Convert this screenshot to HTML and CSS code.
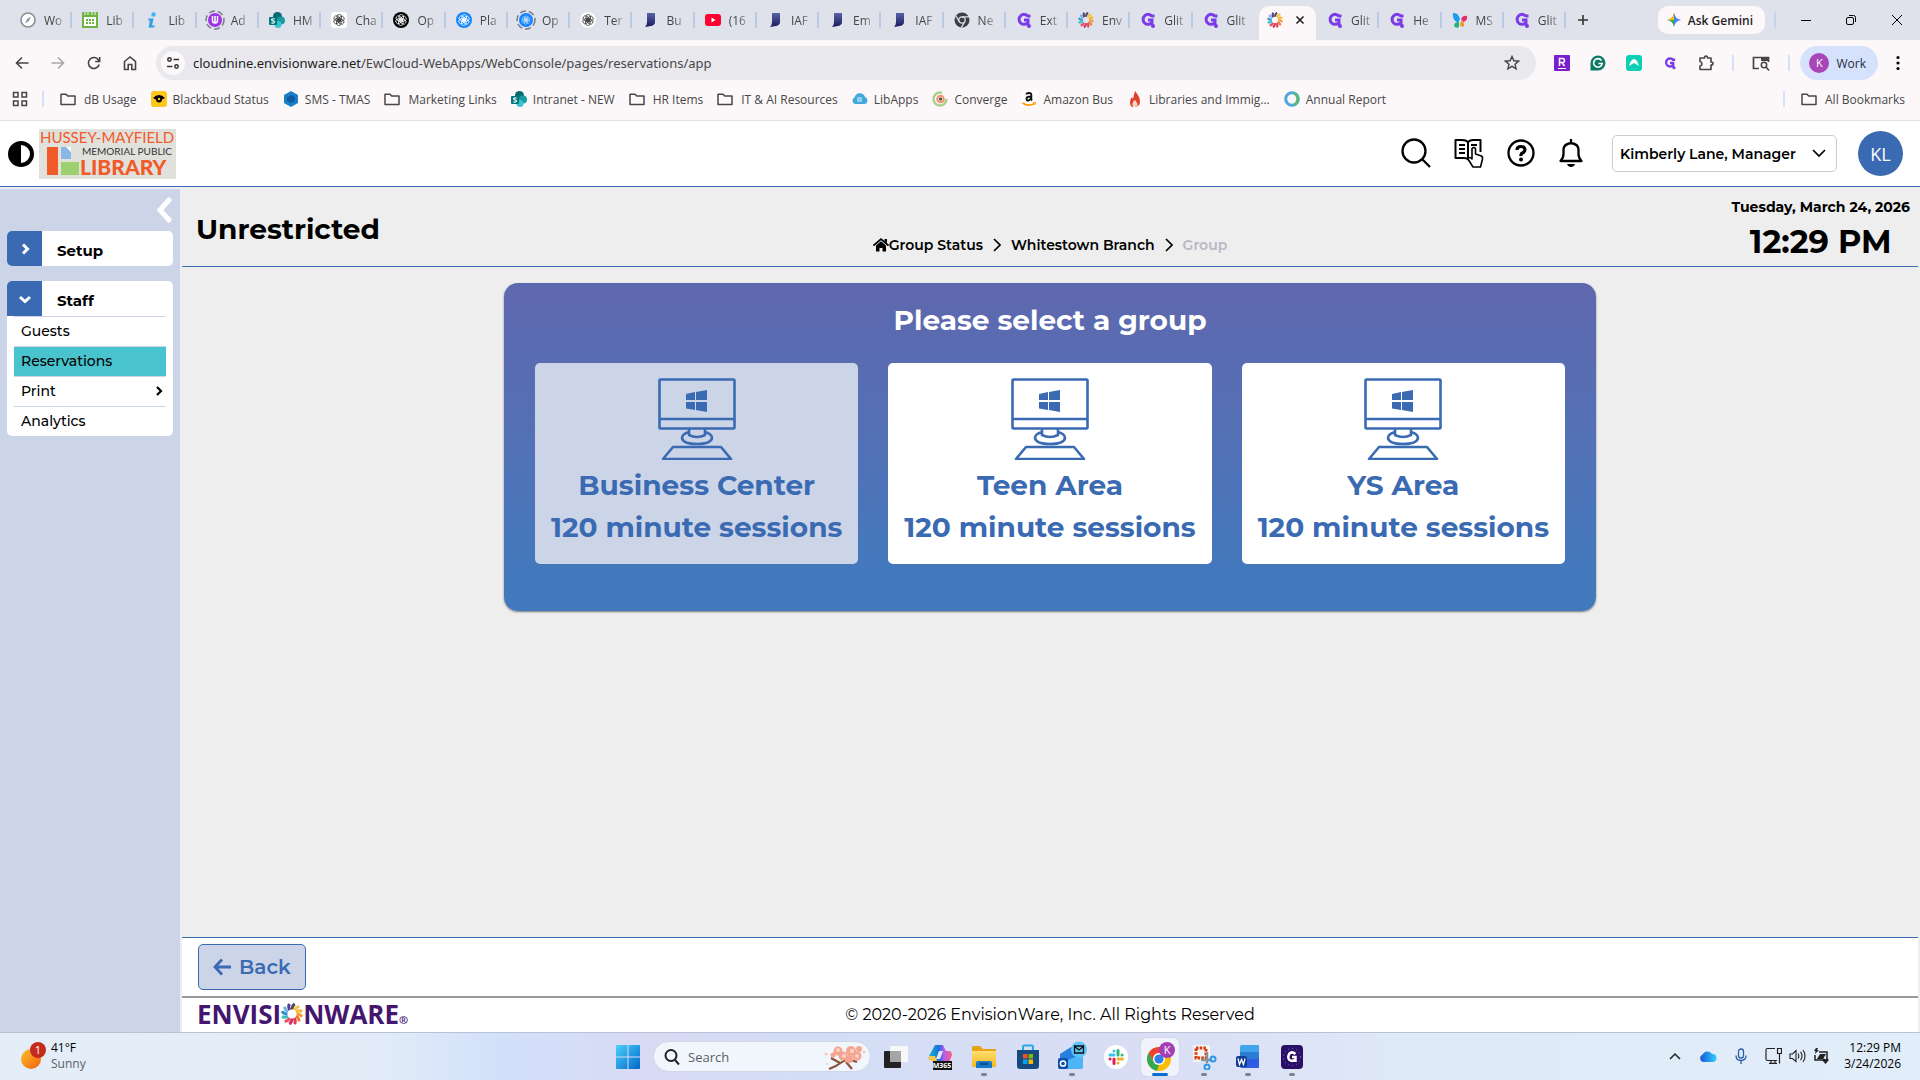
FILE: index.html
```html
<!DOCTYPE html>
<html lang="en">
<head>
<meta charset="utf-8">
<title>Reservations</title>
<link rel="stylesheet" href="styles.css">
</head>
<body>
<svg class="defs" aria-hidden="true">
  <defs>
    <linearGradient id="sun" x1="0" y1="0" x2="1" y2="1"><stop offset="0" stop-color="#fbc02d"/><stop offset="1" stop-color="#f4600c"/></linearGradient>
    <linearGradient id="navy" x1="0" y1="0" x2="0" y2="1"><stop offset="0" stop-color="#5a62a8"/><stop offset="1" stop-color="#171a5c"/></linearGradient>
    <linearGradient id="win" x1="0" y1="0" x2="1" y2="1"><stop offset="0" stop-color="#4cd0fb"/><stop offset="1" stop-color="#0067c8"/></linearGradient>
    <linearGradient id="cop" x1="0" y1="0" x2="1" y2="0"><stop offset="0" stop-color="#18b3c9"/><stop offset=".45" stop-color="#1b6fe0"/><stop offset=".65" stop-color="#b35cf0"/><stop offset="1" stop-color="#ff5f7a"/></linearGradient>
    <linearGradient id="folder" x1="0" y1="0" x2="0" y2="1"><stop offset="0" stop-color="#ffdf70"/><stop offset="1" stop-color="#f5b51e"/></linearGradient>
    <linearGradient id="blue" x1="0" y1="0" x2="1" y2="0"><stop offset="0" stop-color="#1a57d6"/><stop offset="1" stop-color="#2fd0fd"/></linearGradient>
  </defs>
  <symbol id="i-compass" viewBox="0 0 16 16"><circle cx="8" cy="8" r="7" fill="#fff" stroke="#8b8f94" stroke-width="1.6"/><path d="M11 4.5 9 9 5 11.500 7 7z" fill="#8b9aa8"/></symbol>
  <symbol id="i-cal" viewBox="0 0 16 16"><path d="M0 0h16v16H0z" fill="#6db33f"/><path d="M2 5h12v9H2z" fill="#fff"/><path d="M3 0v3M6 0v3M10 0v3M13 0v3" stroke="#fff"/><path d="M4 7h2v2H4zM7 7h2v2H7zM10 7h2v2h-2zM4 10h2v2H4zM7 10h2v2H7zM10 10h2v2h-2z" fill="#6db33f"/></symbol>
  <symbol id="i-info" viewBox="0 0 16 16"><circle cx="9.500" cy="2.500" r="2.200" fill="#3fb4ef"/><path d="M4.500 6.500h5l-1.500 7h3l-1 2H4.500l1.500-7H4z" fill="#2f9fe6"/></symbol>
  <symbol id="i-adm" viewBox="0 0 20 20"><circle cx="10" cy="10" r="9" fill="none" stroke="#777c88" stroke-width="1.500" stroke-dasharray="6 3"/><circle cx="10" cy="10" r="7" fill="#a033e8"/><path d="M7.500 6v4.500a2.500 2.500 0 0 0 5 0V6M10 6v7" fill="none" stroke="#fff" stroke-width="1.500"/></symbol>
  <symbol id="i-sp" viewBox="0 0 16 16"><circle cx="8.500" cy="4.500" r="4.500" fill="#036c70"/><circle cx="12" cy="8.500" r="4" fill="#1a9ba1"/><circle cx="9" cy="12.500" r="3.500" fill="#37c6d0"/><rect y="5" width="8" height="8" rx="1" fill="#03787c"/><path d="M5.700 7.200Q4 6.200 2.700 7.200q-.5 1 1.300 1.700 2 .6 1.400 1.700-1.300 1-3 .1" fill="none" stroke="#fff" stroke-width="1.100"/></symbol>
  <symbol id="i-knot" viewBox="0 0 16 16"><g fill="none" stroke="currentColor" stroke-width=".8"><rect x="6" y="2.500" width="4.500" height="6.500" rx="2.200"/><rect x="6" y="2.500" width="4.500" height="6.500" rx="2.200" transform="rotate(60 8 8)"/><rect x="6" y="2.500" width="4.500" height="6.500" rx="2.200" transform="rotate(120 8 8)"/><rect x="6" y="2.500" width="4.500" height="6.500" rx="2.200" transform="rotate(180 8 8)"/><rect x="6" y="2.500" width="4.500" height="6.500" rx="2.200" transform="rotate(240 8 8)"/><rect x="6" y="2.500" width="4.500" height="6.500" rx="2.200" transform="rotate(300 8 8)"/></g></symbol>
  <symbol id="i-gpt-w" viewBox="0 0 16 16"><rect width="16" height="16" rx="3" fill="#fff"/><use href="#i-knot" color="#333"/></symbol>
  <symbol id="i-gpt-k" viewBox="0 0 16 16"><circle cx="8" cy="8" r="8"/><use href="#i-knot" color="#fff"/></symbol>
  <symbol id="i-gpt-b" viewBox="0 0 16 16"><circle cx="8" cy="8" r="8" fill="#1285ff"/><use href="#i-knot" color="#fff"/></symbol>
  <symbol id="i-gpt-c" viewBox="0 0 16 16"><circle cx="8" cy="8" r="8" fill="#fff"/><use href="#i-knot" color="#333"/></symbol>
  <symbol id="i-gpt-d" viewBox="0 0 20 20"><circle cx="10" cy="10" r="9" fill="none" stroke="#777c88" stroke-width="1.500" stroke-dasharray="6 3"/><circle cx="10" cy="10" r="7" fill="#1285ff"/><use href="#i-knot" x="4" y="4" width="12" height="12" color="#cfe6ff"/></symbol>
  <symbol id="i-navy" viewBox="0 0 16 16"><path d="M5 1h8v9q0 3-4 4l-6 1q2-2 2-5z" fill="url(#navy)"/></symbol>
  <symbol id="i-yt" viewBox="0 0 16 16"><rect y="2" width="16" height="12" rx="3" fill="#ff0033"/><path d="M6.500 5.500v5l4-2.500z" fill="#fff"/></symbol>
  <symbol id="i-chr" viewBox="0 0 16 16"><circle cx="8" cy="8" r="7.500" fill="#3c4043"/><circle cx="8" cy="8" r="3.200" fill="none" stroke="#dfe2eb" stroke-width="1.200"/><path d="M8 4.800h7M5.200 9.600 1.800 3.800M10.800 9.600 7.400 15.400" stroke="#dfe2eb" stroke-width="1.200"/></symbol>
  <symbol id="i-g" viewBox="0 0 16 16"><path d="M13 2.500v3M12.200 4.500A5 5 0 1 0 12 10.500V8H8M12 8.500v5" fill="none" stroke="#7c3be8" stroke-width="3"/><circle cx="13" cy="14" r="2" fill="#7c3be8"/></symbol>
  <symbol id="i-wheel" viewBox="0 0 24 24"><g fill="none" stroke-width="3.200"><path d="M12 7Q12 3 15 1" stroke="#4b4b55"/><path d="M12 7Q12 3 15 1" stroke="#f3c64a" transform="rotate(30 12 12)"/><path d="M12 7Q12 3 15 1" stroke="#f7b733" transform="rotate(60 12 12)"/><path d="M12 7Q12 3 15 1" stroke="#f59b2d" transform="rotate(90 12 12)"/><path d="M12 7Q12 3 15 1" stroke="#ee7b35" transform="rotate(120 12 12)"/><path d="M12 7Q12 3 15 1" stroke="#e23b4e" transform="rotate(150 12 12)"/><path d="M12 7Q12 3 15 1" stroke="#d32f6a" transform="rotate(180 12 12)"/><path d="M12 7Q12 3 15 1" stroke="#ef4f5c" transform="rotate(210 12 12)"/><path d="M12 7Q12 3 15 1" stroke="#3bbfc2" transform="rotate(240 12 12)"/><path d="M12 7Q12 3 15 1" stroke="#2b8ed0" transform="rotate(270 12 12)"/><path d="M12 7Q12 3 15 1" stroke="#6fb6e3" transform="rotate(300 12 12)"/><path d="M12 7Q12 3 15 1" stroke="#5b3a8c" transform="rotate(330 12 12)"/></g></symbol>
  <symbol id="i-msn" viewBox="0 0 16 16"><path d="M1 1q5-1 7 6l-2 4Q0 8 1 1z" fill="#1a9cf0"/><path d="M2 14q0-4 5-4v5q-3 2-5-1z" fill="#22b573"/><path d="M9 7q2-4 6-3 1 5-4 6z" fill="#e3306c"/><path d="M9 9q4 1 3 5-2 2-4-1z" fill="#f7931e"/></symbol>
  <symbol id="i-folder" viewBox="0 0 16 16"><path d="M1 3.200h5l1.700 1.800H15v8.500H1z" fill="none" stroke="#474747" stroke-width="1.500" stroke-linejoin="round"/></symbol>
  <symbol id="i-pc" viewBox="0 0 78 82"><g fill="none" stroke="#3a6ab2" stroke-width="2.600" stroke-linejoin="round"><rect x="1.500" y="1.500" width="75" height="49" rx="1"/><path d="M1.500 41h75M31 51v6q8 4 16 0v-6M31 54q-7 2-7 6 1 6 15 6t15-6q0-4-7-6M15 69h48l10 12H5z"/></g><path d="M28 16 37 14v8h-9zM38 14l11-2v10H38zM28 24h9v8l-9-1.500zM38 24h11v10l-11-2z" fill="#3a6ab2"/></symbol>
</svg>

<header class="browser">
  <div class="tabstrip">
    <div class="tabs" role="tablist">
      <div class="tab"><svg><use href="#i-compass"/></svg><span>Wo</span></div>
      <div class="tab"><svg><use href="#i-cal"/></svg><span>Lib</span></div>
      <div class="tab"><svg><use href="#i-info"/></svg><span>Lib</span></div>
      <div class="tab"><svg class="big"><use href="#i-adm"/></svg><span>Ad</span></div>
      <div class="tab"><svg><use href="#i-sp"/></svg><span>HM</span></div>
      <div class="tab"><svg><use href="#i-gpt-w"/></svg><span>Cha</span></div>
      <div class="tab"><svg><use href="#i-gpt-k"/></svg><span>Op</span></div>
      <div class="tab"><svg><use href="#i-gpt-b"/></svg><span>Pla</span></div>
      <div class="tab"><svg class="big"><use href="#i-gpt-d"/></svg><span>Op</span></div>
      <div class="tab"><svg><use href="#i-gpt-c"/></svg><span>Ter</span></div>
      <div class="tab"><svg><use href="#i-navy"/></svg><span>Bu</span></div>
      <div class="tab"><svg><use href="#i-yt"/></svg><span>(16</span></div>
      <div class="tab"><svg><use href="#i-navy"/></svg><span>IAF</span></div>
      <div class="tab"><svg><use href="#i-navy"/></svg><span>Em</span></div>
      <div class="tab"><svg><use href="#i-navy"/></svg><span>IAF</span></div>
      <div class="tab"><svg><use href="#i-chr"/></svg><span>Ne</span></div>
      <div class="tab"><svg><use href="#i-g"/></svg><span>Ext</span></div>
      <div class="tab"><svg><use href="#i-wheel"/></svg><span>Env</span></div>
      <div class="tab"><svg><use href="#i-g"/></svg><span>Glit</span></div>
      <div class="tab before"><svg><use href="#i-g"/></svg><span>Glit</span></div>
      <div class="tab active"><svg><use href="#i-wheel"/></svg><button class="icon" aria-label="Close tab"><svg viewBox="0 0 10 10" class="x"><path d="M1.500 1.500l7 7M8.500 1.500l-7 7" stroke="#1f1f1f" stroke-width="1.600"/></svg></button></div>
      <div class="tab"><svg><use href="#i-g"/></svg><span>Glit</span></div>
      <div class="tab"><svg><use href="#i-g"/></svg><span>He</span></div>
      <div class="tab"><svg><use href="#i-msn"/></svg><span>MS</span></div>
      <div class="tab"><svg><use href="#i-g"/></svg><span>Glit</span></div>
    </div>
    <button class="icon plus" aria-label="New tab"><svg width="12" height="12" viewBox="0 0 12 12"><path d="M6 1v10M1 6h10" stroke="#333" stroke-width="1.600"/></svg></button>
    <div class="winctl">
      <button class="gemini"><svg width="14" height="14" viewBox="0 0 14 14"><path d="M7 0q1 6 7 7H0q6-1 7-7z" fill="#ea4335"/><path d="M0 7h7v7Q6 8 0 7z" fill="#34a853"/><path d="M0 7q6-1 7-7v7z" fill="#fbbc04"/><path d="M7 0q1 6 7 7-6 1-7 7z" fill="#4285f4"/></svg>Ask Gemini</button>
      <i class="sep"></i>
      <button class="icon" aria-label="Minimize"><svg width="10" height="12" viewBox="0 0 10 12"><path d="M0 6.500h10" stroke="#000"/></svg></button>
      <button class="icon" aria-label="Restore"><svg width="12" height="12" viewBox="0 0 12 12" fill="none" stroke="#000"><rect x="1.500" y="3.500" width="7" height="7" rx="1.500"/><path d="M4 1.500h4.500a2 2 0 0 1 2 2V8"/></svg></button>
      <button class="icon" aria-label="Close"><svg width="12" height="12" viewBox="0 0 12 12"><path d="M1 1l10 10M11 1 1 11" stroke="#000"/></svg></button>
    </div>
  </div>

  <div class="toolbar">
    <div class="nav">
      <button class="icon" aria-label="Back"><svg width="16" height="16" viewBox="0 0 16 16" fill="none" stroke="#444" stroke-width="1.600"><path d="M14.500 8H2.500M8 2.500 2.500 8 8 13.500"/></svg></button>
      <button class="icon" aria-label="Forward"><svg width="16" height="16" viewBox="0 0 16 16" fill="none" stroke="#a8a8a8" stroke-width="1.600"><path d="M1.500 8h12M8 2.500 13.500 8 8 13.500"/></svg></button>
      <button class="icon" aria-label="Reload"><svg width="16" height="16" viewBox="0 0 16 16" fill="none" stroke="#444" stroke-width="1.600"><path d="M13.200 9.500A5.500 5.500 0 1 1 12.500 5L13.500 6.500M13.700 2v4.500H9.200"/></svg></button>
      <button class="icon" aria-label="Home"><svg width="16" height="16" viewBox="0 0 16 16" fill="none" stroke="#444" stroke-width="1.600"><path d="M2.500 6.500 8 2l5.500 4.500v8h-3.700V9.500H6.200v5H2.500z"/></svg></button>
    </div>
    <div class="omni">
      <span class="tune"><svg width="14" height="14" viewBox="0 0 14 14" fill="none" stroke="#333" stroke-width="1.500"><circle cx="3.500" cy="3.500" r="1.700"/><path d="M7.500 3.500H13M1 10.500h5.500"/><circle cx="10.500" cy="10.500" r="1.700"/></svg></span>
      <span class="url"><b>cloudnine.envisionware.net</b>/EwCloud-WebApps/WebConsole/pages/reservations/app</span>
      <button class="icon" aria-label="Bookmark"><svg width="16" height="16" viewBox="0 0 16 16"><path d="M8 1.500l1.900 4.300 4.700.4-3.600 3.100 1.100 4.600L8 11.400l-4.100 2.500L5 9.300 1.400 6.200l4.700-.4z" fill="none" stroke="#444" stroke-width="1.400"/></svg></button>
    </div>
    <div class="ext">
      <svg viewBox="0 0 16 16"><rect width="16" height="16" rx="1" fill="#7a1fd0"/><path d="M5.500 11V3.500h3a2 2 0 0 1 0 4h-3M8 7.500l2.500 3.500" stroke="#fff" stroke-width="1.500" fill="none"/><path d="M4 13.500h8" stroke="#fff"/></svg>
      <svg viewBox="0 0 16 16"><path d="M8 .5A7.500 7.500 0 1 1 8 15.500H.5V8A7.500 7.500 0 0 1 8 .5z" fill="#0e7a64"/><path d="M11.500 5.500A4.300 4.300 0 1 0 12.200 8.500H8.500" fill="none" stroke="#fff" stroke-width="1.600"/></svg>
      <svg viewBox="0 0 16 16"><rect width="16" height="16" rx="3" fill="#0acfb4"/><path d="M3 11Q5 4 8 4t5 7l-5-3z" fill="#fff"/></svg>
      <svg viewBox="0 0 20 20"><use href="#i-g" x="2" y="2" width="16" height="16"/></svg>
      <svg viewBox="0 0 16 16"><path d="M2 3h4.500q0-2 1.500-2t1.500 2H13v4q2 0 2 1.500T13 10v4.500H2V11q2-.5 2-2.200T2 6.500z" fill="none" stroke="#444" stroke-width="1.600" stroke-linejoin="round"/></svg>
      <i class="sep"></i>
      <svg class="wide" viewBox="0 0 18 16"><path d="M7 13.500H1.500v-11h15V7" fill="none" stroke="#444" stroke-width="1.700"/><path d="M9 2h8v4H9z" fill="#444"/><circle cx="12" cy="10" r="2.700" fill="none" stroke="#444" stroke-width="1.500"/><path d="M14 12l3 3.500" stroke="#444" stroke-width="1.600"/></svg>
      <i class="sep"></i>
    </div>
    <button class="profile"><span>K</span>Work</button>
    <button class="icon dots" aria-label="Menu"><svg width="4" height="16" viewBox="0 0 4 16"><circle cx="2" cy="2.500" r="1.600"/><circle cx="2" cy="8" r="1.600"/><circle cx="2" cy="13.500" r="1.600"/></svg></button>
  </div>

  <nav class="bookmarks">
    <svg viewBox="0 0 16 16" fill="none" stroke="#444" stroke-width="1.500"><path d="M1.500 1.500h4.500v4.500H1.500zM10 1.500h4.500v4.500H10zM1.500 10h4.500v4.500H1.500zM10 10h4.500v4.500H10z"/></svg>
    <i class="sep"></i>
    <a href="#" class="dir"><svg><use href="#i-folder"/></svg>dB Usage</a>
    <a href="#"><svg viewBox="0 0 16 16"><rect width="16" height="16" rx="3" fill="#ffc61e"/><path d="M2 7q6-6 12 0l-3 1.500a3 3 0 1 1-6 0z"/><circle cx="8" cy="8" r="1.200" fill="#ffc61e"/></svg>Blackbaud Status</a>
    <a href="#"><svg viewBox="0 0 16 16"><path d="M8 0l7 4v8l-7 4-7-4V4z" fill="#1a7fc8"/><path d="M8 4l4 2v4l-4 2-4-2V6z" fill="#0e5c9f"/></svg>SMS - TMAS</a>
    <a href="#" class="dir"><svg><use href="#i-folder"/></svg>Marketing Links</a>
    <a href="#"><svg><use href="#i-sp"/></svg>Intranet - NEW</a>
    <a href="#" class="dir"><svg><use href="#i-folder"/></svg>HR Items</a>
    <a href="#" class="dir"><svg><use href="#i-folder"/></svg>IT &amp; AI Resources</a>
    <a href="#"><svg viewBox="0 0 16 16"><path d="M3 13a3.500 3.500 0 0 1-.5-6.500A5.500 5.500 0 0 1 13 6a3.700 3.700 0 0 1 0 7z" fill="#45a8dc"/><path d="M5 6h5v5H5z" fill="#8fd0f2"/></svg>LibApps</a>
    <a href="#"><svg viewBox="0 0 16 16"><circle cx="8" cy="8" r="6.500" fill="none" stroke="#a9d18e" stroke-width="2.500" stroke-dasharray="32 9"/><circle cx="8.500" cy="8" r="3.300" fill="#fff" stroke="#f3936b" stroke-width="2"/><circle cx="8.500" cy="8" r="1.800" fill="#555"/></svg>Converge</a>
    <a href="#"><svg viewBox="0 0 16 16"><rect width="16" height="16" fill="#fff"/><path d="M5.500 3.500q0-1.500 2.500-1.500t2.300 2v4q0 1 .9 1.500M10 5.500q-4.500 0-4.500 2.200t2 1.800T10 7" fill="none" stroke="#111" stroke-width="1.900"/><path d="M1.500 12q6 4 12 .5" fill="none" stroke="#f90" stroke-width="1.600"/><path d="M12 11.500h2.500L14 14" fill="none" stroke="#f90"/></svg>Amazon Bus</a>
    <a href="#"><svg viewBox="0 0 16 16"><path d="M8 0q5 6 5 10.500T8 16 3 11q0-3 2-5l1 2q1-4 2-8z" fill="#e0412a"/><path d="M8 9q2.500 3 2.500 4.500T8 16t-2.500-2.500T8 9z" fill="#fbd7c9"/></svg>Libraries and Immig...</a>
    <a href="#"><svg viewBox="0 0 16 16" fill="none" stroke-width="3"><circle cx="8" cy="8" r="6.300" stroke="#4fa8dd"/><path d="M10 2.200a6.300 6.300 0 0 1 0 11.600" stroke="#5cb87a"/></svg>Annual Report</a>
    <span class="all"><i class="sep"></i><a href="#" class="dir"><svg><use href="#i-folder"/></svg>All Bookmarks</a></span>
  </nav>
</header>

<div class="app">
  <header class="apphead">
    <button class="icon" aria-label="Contrast"><svg width="26" height="26" viewBox="0 0 26 26"><circle cx="13" cy="13" r="11" fill="#fff" stroke="#000" stroke-width="4"/><path d="M13 1a12 12 0 0 0 0 24z"/></svg></button>
    <svg class="liblogo" viewBox="0 0 137 50" role="img" aria-label="Hussey-Mayfield Memorial Public Library">
      <rect width="137" height="50" fill="#e1e1dc"/>
      <path d="M8 18h11v28H8z" fill="#f15a29"/><path d="M22 18h6l4 4v8H22z" fill="#8ab8e6"/><path d="M27 18h5v5z" fill="#fff"/><path d="M22 33h18v13H22z" fill="#9fd070"/>
      <text x="1" y="14" class="l1">HUSSEY-MAYFIELD</text><text x="43" y="26" class="l2">MEMORIAL PUBLIC</text><text x="41" y="46" class="l3">LIBRARY</text>
    </svg>
    <div class="tools">
      <button class="icon" aria-label="Search"><svg width="30" height="30" viewBox="0 0 30 30" fill="none" stroke="#000" stroke-width="2.300"><circle cx="13" cy="13" r="11.500"/><path d="M21 21l8 8"/></svg></button>
      <button class="icon" aria-label="Catalog"><svg width="30" height="30" viewBox="0 0 30 30" fill="none" stroke="#000" stroke-width="2" stroke-linejoin="round"><path d="M14 4Q12 2 8 2H1.500v18H10q3 0 4 1.500V4q2-2 5-2h7.500v12"/><path d="M5 7h6M5 11h6M5 15h6M17 7h6"/><path d="M19 29l-5-8q1-3 4 0V10.500q2-2 3.500 0V16l6 2q1.500 1 1 3l-2 8z" fill="#fff" stroke-width="1.600"/></svg></button>
      <button class="icon" aria-label="Help"><svg width="28" height="28" viewBox="0 0 28 28" fill="none" stroke="#000"><circle cx="14" cy="14" r="12.500" stroke-width="2.300"/><path d="M10 11q0-3.500 4-3.500t4 3.300q0 2-2.200 3T14 17" stroke-width="3.200"/><circle cx="14" cy="20.500" r="2" fill="#000" stroke="none"/></svg></button>
      <button class="icon" aria-label="Notifications"><svg width="26" height="28" viewBox="0 0 26 28"><path d="M2.500 22h21q-3-3-3-7v-4q0-6-7.500-7-7.500 1-7.500 7v4q0 4-3 7zM13 0v4" fill="none" stroke="#000" stroke-width="2.300" stroke-linejoin="round"/><path d="M9 25h8q-1 3-4 3t-4-3z"/></svg></button>
    </div>
    <select class="user" aria-label="User"><option>Kimberly Lane, Manager</option></select>
    <button class="avatar">KL</button>
  </header>

  <div class="body">
    <aside class="side">
      <button class="icon collapse" aria-label="Collapse menu"><svg width="16" height="26" viewBox="0 0 16 26"><path d="M13 3 4 13l9 10" fill="none" stroke="#fff" stroke-width="5" stroke-linecap="round"/></svg></button>
      <section class="menu">
        <button class="menuhead"><span><svg width="12" height="12" viewBox="0 0 12 12"><path d="M4 1.500 8.500 6 4 10.500" fill="none" stroke="#fff" stroke-width="3"/></svg></span><b>Setup</b></button>
      </section>
      <section class="menu">
        <button class="menuhead open"><span><svg width="12" height="12" viewBox="0 0 12 12"><path d="M1 4l5 4.500L11 4" fill="none" stroke="#fff" stroke-width="3"/></svg></span><b>Staff</b></button>
        <a href="#">Guests</a>
        <a href="#" class="on">Reservations</a>
        <a href="#">Print<svg width="8" height="10" viewBox="0 0 8 10"><path d="M2 1l4 4-4 4" fill="none" stroke="#000" stroke-width="2.200"/></svg></a>
        <a href="#">Analytics</a>
      </section>
    </aside>

    <main class="main">
      <div class="titlebar">
        <h1>Unrestricted</h1>
        <nav class="crumbs">
          <a href="#"><svg width="16" height="14" viewBox="0 0 16 14"><path d="M.5 7.500 8 1.200l7.500 6.300" fill="none" stroke="#000" stroke-width="1.700"/><path d="M11.500 1H14v4l-2.500-2zM3 7.500l5-4.200 5 4.200V13.500H9.500V10h-3v3.500H3z"/></svg>Group Status</a>
          <svg width="8" height="14" viewBox="0 0 8 14"><path d="M1 1l6 6-6 6" fill="none" stroke="#000" stroke-width="1.700"/></svg>
          <a href="#">Whitestown Branch</a>
          <svg width="8" height="14" viewBox="0 0 8 14"><path d="M1 1l6 6-6 6" fill="none" stroke="#000" stroke-width="1.700"/></svg>
          <span>Group</span>
        </nav>
        <div class="clock"><p>Tuesday, March 24, 2026</p><strong>12:29 PM</strong></div>
      </div>
      <div class="stage">
        <section class="panel">
          <h2>Please select a group</h2>
          <div class="cards">
            <button class="card picked"><svg width="78" height="82"><use href="#i-pc"/></svg><span>Business Center</span><span>120 minute sessions</span></button>
            <button class="card"><svg width="78" height="82"><use href="#i-pc"/></svg><span>Teen Area</span><span>120 minute sessions</span></button>
            <button class="card"><svg width="78" height="82"><use href="#i-pc"/></svg><span>YS Area</span><span>120 minute sessions</span></button>
          </div>
        </section>
      </div>
      <div class="actions"><button class="back"><svg width="18" height="18" viewBox="0 0 18 18"><path d="M9 1.500 2 9l7 7.500M2 9h16" fill="none" stroke="#3a6ab2" stroke-width="2.800"/></svg>Back</button></div>
      <footer class="foot">
        <div class="brand">ENVISI<svg width="22" height="22"><use href="#i-wheel"/></svg>NWARE<small>®</small></div>
        <p>© 2020-2026 EnvisionWare, Inc. All Rights Reserved</p>
      </footer>
    </main>
  </div>
</div>

<footer class="taskbar">
  <div class="weather">
    <svg width="26" height="30" viewBox="0 0 26 30"><circle cx="11" cy="18" r="10" fill="url(#sun)"/><circle cx="18" cy="9" r="8" fill="#c42b1c"/><text x="18" y="13" text-anchor="middle">1</text></svg>
    <p>41°F<br><span>Sunny</span></p>
  </div>
  <div class="dock">
    <button aria-label="Start"><svg width="24" height="24" viewBox="0 0 24 24" fill="url(#win)"><path d="M0 1a1 1 0 0 1 1-1h10.500v11.500H0zM12.500 0H23a1 1 0 0 1 1 1v10.500H12.500zM0 12.500h11.500V24H1a1 1 0 0 1-1-1zM12.500 12.500H24V23a1 1 0 0 1-1 1H12.500z"/></svg></button>
    <label class="find"><svg width="16" height="18" viewBox="0 0 16 18" fill="none" stroke="#222" stroke-width="2"><circle cx="7" cy="7.500" r="5.500"/><path d="M11 12l4 4.500"/></svg><input type="text" placeholder="Search" aria-label="Search">
      <svg width="42" height="26" viewBox="0 0 42 26"><path d="M5 25q8-3 13-7t15 0M16 19l-9-5M22 18l6 7" fill="none" stroke="#8a5238" stroke-width="2.200"/><g fill="#f4a58f"><circle cx="14" cy="7" r="4.500"/><circle cx="19" cy="12" r="4.500"/><circle cx="27" cy="7" r="5"/><circle cx="33" cy="12" r="4.500"/><circle cx="35" cy="5" r="3"/><circle cx="9" cy="11" r="2.500"/><circle cx="25" cy="15" r="4"/></g><g fill="#fbd3c4"><circle cx="14" cy="6" r="2"/><circle cx="20" cy="12" r="2"/><circle cx="28" cy="7" r="2.200"/><circle cx="33" cy="12" r="2"/></g><g fill="#f9c4bd"><circle cx="2" cy="10" r="1.500"/><circle cx="40" cy="8" r="1.500"/><circle cx="3" cy="20" r="1"/></g></svg></label>
    <button aria-label="Task view"><svg width="24" height="24" viewBox="0 0 24 24"><rect y="6" width="17" height="17" rx="1" fill="#222"/><rect x="6" y="1" width="18" height="16" rx="1" fill="#f7f7f7"/><rect x="6" y="6" width="11" height="11" fill="#a5a5a5"/></svg></button>
    <button aria-label="Microsoft 365"><svg width="26" height="26" viewBox="0 0 26 26"><path d="M8 1h8l3 6h4q2 1 2 4l-3 8H10l-3-3H3q-2-1-1-4z" fill="url(#cop)"/><path d="M12 7h4l-3 8H9z" fill="#dfe6ff"/><path d="M2 12h6l2 5H4q-3-1-2-5z" fill="#f5c84b"/><rect x="6" y="17" width="19" height="9" fill="#111"/><text x="15" y="24" text-anchor="middle" class="m">M365</text></svg></button>
    <button class="run" aria-label="File Explorer"><svg width="24" height="24" viewBox="0 0 24 24"><path d="M0 2q0-1 1-1h7l3 3h12q1 0 1 1v17H1q-1 0-1-1z" fill="#e8a317"/><path d="M0 6h24v15q0 1-1 1H1q-1 0-1-1z" fill="url(#folder)"/><path d="M4 23v-5q0-2 2-2h12q2 0 2 2v5z" fill="#1777c9"/><path d="M8 19h8" stroke="#0c4a85" stroke-width="2"/></svg></button>
    <button aria-label="Store"><svg width="24" height="26" viewBox="0 0 24 26"><path d="M7 6V3q0-1.500 1.500-1.500h7Q17 1.500 17 3v3" fill="none" stroke="#29a8ea" stroke-width="2"/><path d="M1 6h22v16q0 3-3 3H4q-3 0-3-3z" fill="#17497f"/><path d="M7 10h4.500v4.500H7z" fill="#f25022"/><path d="M12.500 10H17v4.500h-4.500z" fill="#7fba00"/><path d="M7 15.500h4.500V20H7z" fill="#00a4ef"/><path d="M12.500 15.500H17V20h-4.500z" fill="#ffb900"/></svg></button>
    <button class="run" aria-label="Outlook"><svg width="30" height="32" viewBox="0 0 30 32"><path d="M3 13 14 6l12 8v11q0 3-3 3H8q-4 0-5-3z" fill="#2a7de1"/><path d="M8 20l18-7v12q0 3-3 3H10z" fill="#4db5f5"/><rect x="1" y="17" width="10" height="11" rx="2" fill="#0f4fa8"/><circle cx="6" cy="22.500" r="2.600" fill="none" stroke="#fff" stroke-width="1.500"/><circle cx="22" cy="8.500" r="8" fill="#5bc5f5"/><path d="M17.500 5h9v7h-9zM17.500 5.500l4.500 3.500 4.500-3.500" fill="none" stroke="#111" stroke-width="1.300"/></svg></button>
    <button aria-label="Slack"><svg width="24" height="24" viewBox="0 0 24 24" stroke-width="3" stroke-linecap="round"><circle cx="12" cy="12" r="12" fill="#fff"/><path d="M10 6v.1M6 10h4" stroke="#36c5f0"/><path d="M14 5.500V10M18 10h.1" stroke="#2eb67d"/><path d="M14 14h4.500M14 18v.1" stroke="#ecb22e"/><path d="M10 14v4.500M6 14h.1" stroke="#e01e5a"/></svg></button>
    <button class="run now" aria-label="Chrome"><svg width="30" height="32" viewBox="0 0 30 32"><circle cx="14" cy="18" r="12" fill="#fbbc04"/><path d="M14 6a12 12 0 0 1 10.400 6H14a6 6 0 0 0-5.200 9L3.600 12A12 12 0 0 1 14 6z" fill="#ea4335"/><path d="M3.600 12l5.200 9A6 6 0 0 0 14 24l-2 5.800A12 12 0 0 1 3.600 12z" fill="#34a853"/><circle cx="14" cy="18" r="6" fill="#fff"/><circle cx="14" cy="18" r="4.600" fill="#2f7de9"/><circle cx="22" cy="9" r="8" fill="#a53fb8"/><text x="22" y="13" text-anchor="middle">K</text></svg></button>
    <button class="run" aria-label="Snipping Tool"><svg width="26" height="26" viewBox="0 0 26 26" fill="none"><path d="M2 1h17v17H2z" fill="#f5f5f5"/><path d="M5 4h10v10H5z" stroke="#d83b01" stroke-width="3" stroke-dasharray="2.500 1.200"/><path d="M16 8v11M10 16h11" stroke="#8a8f98" stroke-width="2.500"/><circle cx="22" cy="15" r="2.500" stroke="#2899e8" stroke-width="2"/><circle cx="16" cy="23" r="2.500" stroke="#2899e8" stroke-width="2"/></svg></button>
    <button class="run" aria-label="Word"><svg width="24" height="26" viewBox="0 0 24 26"><path d="M6 1h16q1 0 1 1v7H4V3q0-2 2-2z" fill="#41a5ee"/><path d="M4 8h19v8H4z" fill="#2b7cd3"/><path d="M4 15h19v8q0 1-1 1H6q-2 0-2-2z" fill="#2f5be0"/><rect y="12" width="11" height="11" rx="2" fill="#103f91"/><path d="M2 14.500l1.500 6 2-5 2 5 1.500-6" fill="none" stroke="#fff" stroke-width="1.300"/></svg></button>
    <button class="run" aria-label="Glitch"><svg width="22" height="24" viewBox="0 0 22 24"><rect width="22" height="24" rx="4" fill="#2a0f66"/><circle cx="11" cy="12" r="8.500" fill="none" stroke="#9a6cf0" stroke-dasharray="1 3"/><path d="M14.500 9Q11 6 8.500 8.500q-2.500 4 0 6.500 3 2 6-.5V12H11M14.500 13v4" fill="none" stroke="#fff" stroke-width="2.500"/></svg></button>
  </div>
  <div class="tray">
    <svg width="12" height="8" viewBox="0 0 12 8"><path d="M1 7l5-5 5 5" fill="none" stroke="#222" stroke-width="1.500"/></svg>
    <svg width="18" height="12" viewBox="0 0 18 12"><path d="M4 12a4 4 0 0 1-.5-7.500A5.500 5.500 0 0 1 13 4a4 4 0 0 1 1 8z" fill="url(#blue)"/></svg>
    <svg width="12" height="16" viewBox="0 0 12 16" fill="none" stroke="#2b5ba8" stroke-width="1.300"><rect x="3.500" y="1" width="5" height="9" rx="2.500"/><path d="M1 7.500q0 5 5 5t5-5M6 12.500V16"/></svg>
    <span>
      <svg width="17" height="17" viewBox="0 0 17 17" fill="none" stroke="#222" stroke-width="1.200"><path d="M10 1.500H2.500q-1.500 0-1.500 1.500v9q0 1.500 1.500 1.500H12M6 14v2.500M10 14v2.500M4 16.400h8M12.500 1.500h4v5h-4zM14.500 7v9.500"/></svg>
      <svg width="17" height="14" viewBox="0 0 17 14" fill="none" stroke="#222" stroke-width="1.100"><path d="M1 5h2.500L7 1.500v11L3.500 9.500H1zM9 4.500q1.700 2.500 0 5M11.500 2.700q3 4.300 0 8.600M14 1q4 6 0 12"/></svg>
      <svg width="17" height="16" viewBox="0 0 17 16"><path d="M6 4h8v8H2V7" fill="none" stroke="#222" stroke-width="1.500"/><path d="M7 6h6L10 11H4zM3 0l2 0-1 2h2L2 6l.5-3H1zM12.500 16l-3-3.500q0-2 1.500-2l1.500 1 1.500-1q2 0 1.500 2z" fill="#222"/></svg>
    </span>
    <p class="time">12:29 PM<br>3/24/2026</p>
  </div>
</footer>
</body>
</html>
```
FILE: styles.css
```css
* { box-sizing: border-box; margin: 0; }
body {
  display: flex; flex-direction: column; min-height: 100vh;
  font-family: "Open Sans", "Noto Sans", sans-serif; font-size: 12px; color: #000;
}
button, input, select { font: inherit; color: inherit; }
button { border: 0; background: none; padding: 0; }
a { color: inherit; text-decoration: none; }
svg { flex: none; display: block; }
.defs { position: absolute; width: 0; height: 0; }
.icon { display: flex; }
.sep { width: 2px; height: 16px; background: #c3d4f0; }

/* browser window */
.browser { background: #fcf8fa; border-bottom: 1px solid #e2dfe2; }
.tabstrip { display: flex; align-items: center; height: 40px; padding-left: 10px; background: #dfe2eb; }
.tabs { flex: 0 1 1556px; display: grid; grid-template-columns: repeat(25, minmax(0, 1fr)); align-self: stretch; }
.tab { display: flex; align-items: center; gap: 8px; padding-left: 10px; position: relative; color: #444; }
.tab svg { width: 16px; height: 16px; }
.tab svg.big { width: 20px; height: 20px; margin: 0 -2px; }
.tab span { white-space: nowrap; -webkit-mask-image: linear-gradient(270deg, #0006, #000 8px); mask-image: linear-gradient(270deg, #0006, #000 8px); }
.tab::after { content: ""; position: absolute; right: 0; top: 12px; width: 2px; height: 16px; background: #b9c9e6; }
.tab.before::after, .tab.active::after { display: none; }
.tab.active { margin: 6px 1px 0 4px; padding-bottom: 6px; padding-left: 8px; gap: 12px; background: #fcf8fa; border-radius: 10px 10px 0 0; }
.tab.active .x { width: 10px; height: 10px; }
.plus { margin-left: 11px; }
.winctl { display: flex; align-items: center; gap: 34px; margin-left: auto; padding-right: 17px; }
.gemini { display: flex; align-items: center; gap: 7px; height: 28px; padding: 0 12px 0 9px; margin-right: -25px; border-radius: 10px; background: #fcf8fa; font-weight: 600; color: #1f1f1f; }
.winctl .sep { margin-right: -9px; }

.toolbar { display: flex; align-items: center; height: 46px; padding: 0 20px 0 14px; }
.nav { display: flex; gap: 20px; }
.omni { flex: 1; display: flex; align-items: center; height: 34px; margin: 0 18px; padding: 0 16px 0 5px; border-radius: 17px; background: #e9e8ed; }
.tune { display: grid; place-items: center; width: 24px; height: 24px; border-radius: 12px; background: #fcf8fa; margin-right: 8px; }
.url { flex: 1; color: #474747; font-family: "Noto Sans", sans-serif; font-size: 13px; }
.url b { font-weight: 400; color: #1f1f1f; }
.ext { display: flex; align-items: center; gap: 20px; }
.ext svg { width: 16px; height: 16px; }
.ext .wide { width: 18px; }
.ext .sep { background: #d5e1fa; margin: 0 -2px; }
.profile { display: flex; align-items: center; gap: 7px; height: 34px; padding: 0 12px 0 9px; margin: 0 18px 0 12px; border-radius: 17px; background: #d6e2fc; color: #1f2a44; }
.profile span { width: 20px; height: 20px; border-radius: 10px; background: #a845b8; color: #fff; font-size: 11px; line-height: 20px; text-align: center; }

.bookmarks { display: flex; align-items: center; gap: 14px; height: 34px; padding: 0 15px 8px 12px; color: #474747; white-space: nowrap; }
.bookmarks svg { width: 16px; height: 16px; }
.bookmarks a { display: flex; align-items: center; gap: 6px; }
.bookmarks a.dir { gap: 8px; }
.bookmarks .sep { background: #d5e1fa; margin-right: 2px; }
.all { display: flex; gap: 14px; margin-left: auto; }

/* application */
.app { flex: 1; display: flex; flex-direction: column; font-family: Montserrat, Inter, sans-serif; background: #eee; }
.apphead { display: flex; align-items: center; height: 66px; padding: 0 17px 0 8px; background: #fff; border-bottom: 1px solid #3a6ab2; }
.liblogo { width: 137px; height: 50px; margin-left: 5px; }
.liblogo text { font-family: Lato, sans-serif; fill: #f15a29; }
.liblogo .l1 { font-size: 15px; font-weight: 400; }
.liblogo .l2 { font-size: 10px; fill: #333; }
.liblogo .l3 { font-size: 21px; font-weight: 900; }
.tools { display: flex; align-items: center; gap: 23px; margin-left: auto; padding-bottom: 2px; }
.user {
  width: 225px; height: 37px; margin: 0 21px 0 28px; padding: 0 7px; appearance: none; border: 1px solid #ccc; border-radius: 5px;
  font-size: 14px; font-weight: 600;
  background: #fff url("data:image/svg+xml,%3Csvg xmlns='http://www.w3.org/2000/svg' width='14' height='9'%3E%3Cpath d='M1 1l6 6 6-6' fill='none' stroke='%23000' stroke-width='1.700'/%3E%3C/svg%3E") no-repeat right 10px center;
}
.avatar { width: 45px; height: 45px; border-radius: 50%; background: #3a6ab2; color: #fff; font-family: "Open Sans", sans-serif; font-size: 18px; }

.body { flex: 1; display: flex; gap: 2px; padding: 2px 2px 0 0; }
.side { width: 180px; padding: 8px 7px; background: #ccd5e8; font-size: 14px; font-weight: 500; }
.collapse { margin: 0 1px 8px auto; }
.menu { background: #fff; border-radius: 5px; overflow: hidden; margin-bottom: 15px; }
.menuhead { display: flex; align-items: center; gap: 15px; width: 100%; height: 35px; font-size: 15px; }
.menuhead b { font-weight: 700; padding-top: 4px; }
.menuhead span { display: grid; place-items: center; width: 35px; height: 35px; background: #3a6ab2; }
.menu a { display: flex; align-items: center; justify-content: space-between; height: 30px; margin: 0 7px; padding: 0 3px 1px 7px; border-top: 1px solid #ccd5e8; }
.menu a.on { background: #49c3cd; }

.main { flex: 1; display: flex; flex-direction: column; min-width: 0; }
.titlebar { display: grid; grid-template-columns: 1fr auto 1fr; height: 78px; border-bottom: 1px solid #3a6ab2; }
h1 { align-self: center; padding: 2px 0 0 14px; font-size: 28px; font-weight: 700; }
.crumbs { display: flex; align-items: center; gap: 10px; align-self: end; height: 42px; font-size: 14px; font-weight: 600; }
.crumbs a { display: flex; align-items: center; }
.crumbs span { color: #b8b9c4; }
.clock { display: flex; flex-direction: column; justify-self: end; align-items: center; padding: 6px 8px 0 0; }
.clock p { font-size: 14px; font-weight: 700; line-height: 24px; }
.clock strong { font-size: 32px; font-weight: 700; line-height: 46px; }

.stage { flex: 1; padding: 16px 24px; }
.panel { max-width: 1092px; margin: 0 auto; padding: 16px 31px 47px; border-radius: 14px; background: linear-gradient(#5f68ae, #5470b5 45%, #4279bd 90%); box-shadow: 0 1px 2px #777; }
h2 { color: #fff; font-size: 28px; font-weight: 700; line-height: 42px; text-align: center; margin-bottom: 22px; }
.cards { display: grid; grid-template-columns: repeat(3, 1fr); gap: 30px; }
.card { display: flex; flex-direction: column; align-items: center; padding: 15px 8px 16px; border-radius: 5px; background: #fff; color: #3a6ab2; font-size: 28px; font-weight: 700; line-height: 42px; }
.card svg { margin-bottom: 4px; }
.card.picked { background: #ccd5e8; }

.actions { padding: 6px 16px; background: #fff; border-top: 1px solid #3a6ab2; border-bottom: 2px solid #999; }
.back { display: flex; align-items: center; gap: 8px; height: 46px; padding: 0 14px; border: 1px solid #3a6ab2; border-radius: 5px; background: #ccd5e8; color: #3a6ab2; font-size: 20px; font-weight: 600; }
.foot { display: grid; grid-template-columns: 1fr auto 1fr; align-items: center; height: 34px; padding: 0 15px 2px; background: #fff; font-size: 16px; }
.brand { display: flex; align-items: center; font: 700 26px/32px "Open Sans", sans-serif; color: #45166f; }
.brand small { font-size: 11px; align-self: end; line-height: 20px; }

/* taskbar */
.taskbar { display: grid; grid-template-columns: 1fr auto 1fr; align-items: center; height: 48px; border-top: 1px solid #b8c2d2; background: linear-gradient(90deg, #e3eef8 0, #e1ecf8 20%, #d3e0fa 26%, #d8daf4 34%, #d3def6 42%, #d9def4 60%, #dfeaf8 74%, #e1edf8 100%); }
.weather { display: flex; align-items: center; gap: 5px; padding: 0 0 2px 20px; line-height: 16px; }
.weather span { color: #5c6066; }
.taskbar text { font-size: 11px; fill: #fff; }
.taskbar .m { font-size: 7px; font-weight: 700; }
.dock { display: flex; align-items: center; gap: 6px; }
.dock button { position: relative; display: grid; place-items: center; width: 38px; height: 38px; border-radius: 5px; }
.dock .now { background: #f0f3fc; box-shadow: 0 0 1px #99a; }
.dock .run::after { content: ""; position: absolute; bottom: 0; left: 16px; width: 6px; height: 3px; border-radius: 2px; background: #7d828c; }
.dock .now::after { left: 11px; width: 16px; background: #0b6fd0; }
.find { display: flex; align-items: center; width: 218px; height: 31px; padding: 0 4px 0 10px; border-radius: 16px; background: #f1f5fc; border: 1px solid #cfd7e6; }
.find input { flex: 1; min-width: 0; padding: 0 0 0 8px; border: 0; background: none; font-size: 13px; }
.find input::placeholder { color: #5c6066; }
.tray { display: flex; align-items: center; justify-self: end; gap: 18px; padding: 0 19px 2px 0; }
.tray span { display: flex; align-items: center; gap: 7px; margin-right: -4px; }
.time { text-align: right; line-height: 16px; }
```
